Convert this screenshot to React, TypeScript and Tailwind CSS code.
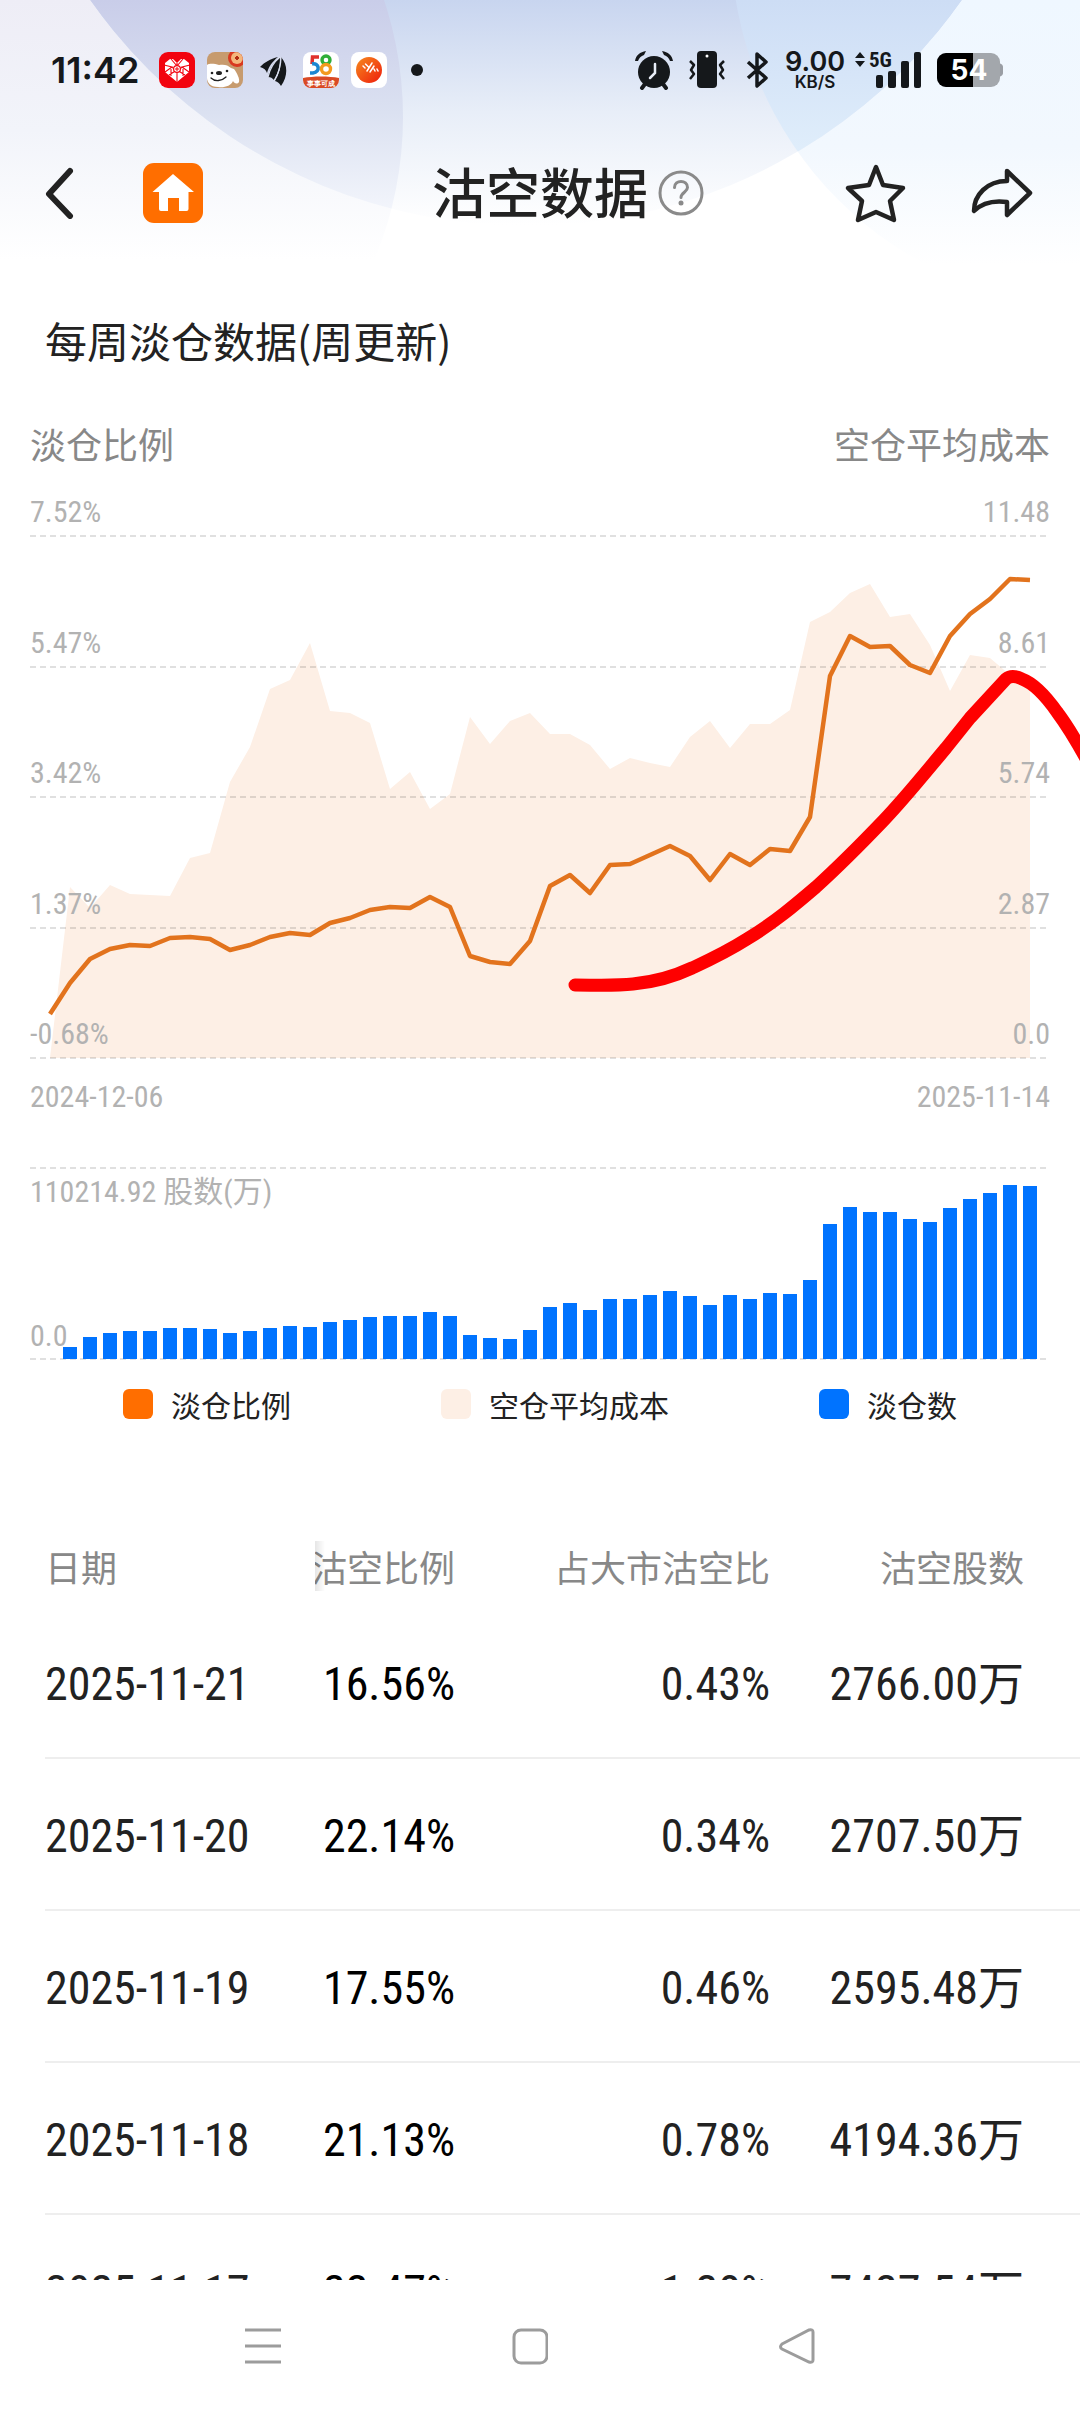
import clsx from 'clsx';
import type { ReactNode } from 'react';

// y of every weekly point, measured down from the top grid line (plot is 522 high)
const COST_Y = [
  522, 351, 372, 349, 358, 359, 360, 322, 317, 246, 211, 153, 144, 107, 175, 177, 187, 253, 236, 273,
  258, 181, 208, 185, 177, 198, 198, 209, 233, 222, 227, 231, 201, 185, 212, 188, 188, 174, 86, 76,
  57, 48, 81, 78, 109, 155, 119, 122, 139, 154,
];

const RATIO_Y = [
  478, 447, 423, 413, 409, 410, 402, 401, 403, 414, 409, 401, 397, 399, 387, 382, 374, 371, 372, 361,
  371, 420, 426, 428, 405, 350, 339, 357, 329, 328, 319, 310, 320, 344, 318, 329, 313, 315, 281, 140,
  100, 111, 110, 129, 137, 100, 78, 63, 43, 44,
];

const SHARES = [
  0, 12, 22, 26, 28, 28, 31, 31, 30, 26, 28, 31, 33, 32, 37, 39, 42, 43, 43, 47,
  43, 24, 21, 20, 29, 52, 56, 49, 60, 60, 64, 68, 63, 54, 64, 60, 66, 65, 79, 135,
  152, 147, 147, 140, 137, 151, 160, 166, 174, 173,
];

const X0 = 50;
const STEP = 20;

const SCALE = [
  ['7.52%', '11.48'],
  ['5.47%', '8.61'],
  ['3.42%', '5.74'],
  ['1.37%', '2.87'],
  ['-0.68%', '0.0'],
];

const LEGEND = [
  { label: '淡仓比例', color: 'bg-[#ff6e00]' },
  { label: '空仓平均成本', color: 'bg-[#fdefe5]' },
  { label: '淡仓数', color: 'bg-[#0073ff]' },
];

const ROWS = [
  { date: '2025-11-21', ratio: '16.56%', market: '0.43%', shares: '2766.00万' },
  { date: '2025-11-20', ratio: '22.14%', market: '0.34%', shares: '2707.50万' },
  { date: '2025-11-19', ratio: '17.55%', market: '0.46%', shares: '2595.48万' },
  { date: '2025-11-18', ratio: '21.13%', market: '0.78%', shares: '4194.36万' },
  { date: '2025-11-17', ratio: '22.47%', market: '1.28%', shares: '7427.54万' },
];

const NUM = 'font-["Roboto_Condensed","Noto_Sans_CJK_SC",sans-serif]';

const toPoints = (ys: number[]) => ys.map((y, i) => `${X0 + i * STEP},${y}`).join(' ');

function Backdrop() {
  return (
    <svg
      className="absolute inset-x-0 top-0 h-[280px] w-full"
      viewBox="0 0 1080 280"
      preserveAspectRatio="none"
      aria-hidden="true"
    >
      <defs>
        <linearGradient id="bgLeft" gradientUnits="userSpaceOnUse" x1="0" y1="0" x2="0" y2="260">
          <stop offset="0" stopColor="#eeedf6" />
          <stop offset="0.5" stopColor="#f2f4fa" />
          <stop offset="1" stopColor="#ffffff" />
        </linearGradient>
        <linearGradient id="bgRight" gradientUnits="userSpaceOnUse" x1="0" y1="0" x2="0" y2="265">
          <stop offset="0" stopColor="#eff7ff" />
          <stop offset="0.55" stopColor="#f2f8fe" />
          <stop offset="1" stopColor="#ffffff" />
        </linearGradient>
        <linearGradient id="bgMid" gradientUnits="userSpaceOnUse" x1="0" y1="0" x2="0" y2="225">
          <stop offset="0" stopColor="#c8d5ef" />
          <stop offset="0.5" stopColor="#e8eef8" />
          <stop offset="1" stopColor="#ffffff" />
        </linearGradient>
        <linearGradient id="bgMidLeft" gradientUnits="userSpaceOnUse" x1="0" y1="0" x2="0" y2="225">
          <stop offset="0" stopColor="#c9cde9" />
          <stop offset="0.5" stopColor="#dbe1f1" />
          <stop offset="1" stopColor="#f6f8fd" />
        </linearGradient>
        <linearGradient id="bgMidRight" gradientUnits="userSpaceOnUse" x1="0" y1="0" x2="0" y2="155">
          <stop offset="0" stopColor="#cdddf5" />
          <stop offset="1" stopColor="#e0eefb" />
        </linearGradient>
        <clipPath id="bigCircle">
          <circle cx="526" cy="-307" r="533" />
        </clipPath>
      </defs>
      <circle cx="33" cy="117" r="370" fill="url(#bgLeft)" />
      <circle cx="1097" cy="-59" r="366" fill="url(#bgRight)" />
      <circle cx="526" cy="-307" r="533" fill="url(#bgMid)" />
      <g clipPath="url(#bigCircle)">
        <circle cx="33" cy="117" r="370" fill="url(#bgMidLeft)" />
        <circle cx="1097" cy="-59" r="366" fill="url(#bgMidRight)" />
      </g>
    </svg>
  );
}

function AppIcon({ children }: { children: ReactNode }) {
  return (
    <svg className="size-9 shrink-0" viewBox="0 0 36 36" aria-hidden="true">
      {children}
    </svg>
  );
}

function Notifications() {
  return (
    <div className="ml-5 flex items-center gap-3">
      <AppIcon>
        <rect width="36" height="36" rx="9" fill="#f2040f" />
        <path d="M18 30 6 20V11l5-4h3l4 4 4-4h3l5 4v9z" fill="#fff" />
        <path
          d="M18 11v19M12 7l6 7 6-7M5 13l8 2-7 5M31 13l-8 2 7 5M12 15l6 3 6-3M10 23l8-5 8 5M12 15v9M24 15v9"
          fill="none"
          stroke="#f2040f"
          strokeWidth="1.1"
        />
        <circle cx="18" cy="17" r="3.4" fill="#fff" stroke="#f2040f" strokeWidth="1.2" />
        <path d="M16 17h4M18 15v4" stroke="#f2040f" strokeWidth="1" />
      </AppIcon>
      <AppIcon>
        <defs>
          <clipPath id="dogTile">
            <rect width="36" height="36" rx="8" />
          </clipPath>
        </defs>
        <g clipPath="url(#dogTile)">
          <rect width="36" height="36" fill="#c79b6e" />
          <circle cx="30" cy="6" r="9" fill="#d9381f" />
          <circle cx="30" cy="6" r="6" fill="#f4b67c" />
          <path d="M28 6h4M30 4v4" stroke="#b32d12" strokeWidth="2" />
          <path d="M0 13c3-2 8-1 12 0 5-1 9 0 12 3l3 1c3 4 6 10 5 13-2 3-5 1-6-1-2 5-9 7-15 6C3 35 0 30 0 26z" fill="#fff" />
          <ellipse cx="12" cy="21" rx="3" ry="2" fill="#222" />
          <circle cx="5" cy="21" r="1.3" fill="#222" />
          <circle cx="20" cy="19" r="1.3" fill="#222" />
          <path d="M4 26c4 4 11 3 15-1" fill="none" stroke="#222" strokeWidth="1.3" strokeLinecap="round" />
        </g>
      </AppIcon>
      <AppIcon>
        <path d="M5 15C10 10 15 7 23 5c-6 5-9 9-11 16-1-3-3-5-7-6z" fill="#15181b" />
        <path d="M13 25C14 17 18 11 25 5c0 9-2 16-6 23-2-2-3-3-6-3z" fill="#15181b" />
        <path d="M20 29c4-7 6-14 6-24 7 8 7 19 0 29-2-3-3-4-6-5z" fill="#15181b" />
        <path d="M25 5c-6 5-10 11-12 20M26 5c0 9-2 16-7 24" fill="none" stroke="#dbe0f0" strokeWidth="1.2" />
      </AppIcon>
      <AppIcon>
        <defs>
          <clipPath id="tile58">
            <rect width="36" height="36" rx="8" />
          </clipPath>
        </defs>
        <g clipPath="url(#tile58)">
          <rect width="36" height="36" fill="#fff" />
          <path d="M16 5H9.500L9 12" fill="none" stroke="#e0302b" strokeWidth="3.500" />
          <path d="M9 12c7-2 9 8 1 9H7" fill="none" stroke="#1c86d1" strokeWidth="3.500" />
          <circle cx="23" cy="8" r="4" fill="none" stroke="#2fae38" strokeWidth="3.400" />
          <circle cx="23" cy="17" r="4.500" fill="none" stroke="#f39a1d" strokeWidth="3.400" />
          <path d="M0 26c10-2 26-2 36 0v10H0z" fill="#d94a24" />
          <text x="18" y="34" textAnchor="middle" fontSize="7" fontWeight="700" fill="#fff">
            事事可成
          </text>
        </g>
      </AppIcon>
      <AppIcon>
        <defs>
          <linearGradient id="ball" x1="0" y1="0" x2="1" y2="1">
            <stop offset="0" stopColor="#f68a1e" />
            <stop offset="1" stopColor="#ee1c0c" />
          </linearGradient>
        </defs>
        <rect width="36" height="36" rx="8" fill="#fff" />
        <circle cx="18" cy="18" r="13" fill="url(#ball)" />
        <path
          d="M12 14l2 2M14.500 12l3 3M16 19l5-8M19 20l4-6M23 17l1 2M26 17l1 2"
          stroke="#fff"
          strokeWidth="1.500"
          strokeLinecap="round"
        />
      </AppIcon>
      <AppIcon>
        <circle cx="18" cy="18" r="6" fill="#15181b" />
      </AppIcon>
    </div>
  );
}

function StatusBar() {
  return (
    <div className='flex h-[140px] items-center pr-[77px] pl-[51px] font-["Inter",sans-serif] text-[#15181b]'>
      <span className="text-[36px] leading-none font-semibold">11:42</span>
      <Notifications />

      <div className="ml-auto flex items-center">
        <svg width="38" height="40" viewBox="0 0 38 40" aria-label="闹钟">
          <path d="M0 11C1 5 5 2 11 1l-2 4c-3 1-5 3-6 6zM38 11c-1-6-5-9-11-10l2 4c3 1 5 3 6 6z" fill="#15181b" />
          <circle cx="19" cy="22" r="16" fill="#15181b" />
          <path d="M10 34l-3 4M28 34l3 4" stroke="#15181b" strokeWidth="4" strokeLinecap="round" />
          <path d="M20 14v9l-5 5" stroke="#e8edf7" strokeWidth="2.500" fill="none" strokeLinecap="round" />
        </svg>
        <svg className="ml-4" width="36" height="38" viewBox="0 0 36 38" aria-label="振动">
          <rect x="8" width="20" height="37" rx="4" fill="#15181b" />
          <circle cx="18" cy="5" r="1.500" fill="#fff" />
          <path
            d="M1 10l4 4-3 5 3 4-4 5M35 10l-4 4 3 5-3 4 4 5"
            stroke="#15181b"
            strokeWidth="2.500"
            fill="none"
            strokeLinejoin="round"
          />
        </svg>
        <svg className="ml-5" width="24" height="38" viewBox="0 0 24 38" aria-label="蓝牙">
          <path d="M3 11l18 16-9 8V3l9 8L3 27" fill="none" stroke="#15181b" strokeWidth="3.500" strokeLinejoin="round" />
        </svg>
        <div className="ml-4 flex flex-col items-center">
          <span className="text-[27px] leading-6 font-semibold">9.00</span>
          <span className="text-[17px] leading-4 font-semibold">KB/S</span>
        </div>
        <svg className="ml-2 overflow-visible" width="68" height="36" viewBox="0 0 68 36" aria-label="信号">
          <path d="M2 6l5-6 5 6zM2 9l5 6 5-6z" fill="#15181b" />
          <text x="16" y="15" fontSize="21" fontWeight="700" fill="#15181b" className={NUM}>
            5G
          </text>
          <rect x="23" y="23" width="7" height="13" rx="2" fill="#15181b" />
          <rect x="35" y="19" width="8" height="17" rx="2" fill="#15181b" />
          <rect x="48" y="9" width="8" height="27" rx="2" fill="#15181b" />
          <rect x="61" y="0" width="7" height="36" rx="2" fill="#15181b" />
        </svg>
        <svg className="ml-4" width="66" height="36" viewBox="0 0 66 36" aria-label="电量">
          <defs>
            <clipPath id="battery">
              <rect y="1" width="63" height="34" rx="9" />
            </clipPath>
          </defs>
          <path d="M60 11c4 0 6 2 6 4v6c0 2-2 4-6 4z" fill="#9a9ea4" />
          <g clipPath="url(#battery)">
            <rect width="63" height="36" fill="#a3a7ac" />
            <rect width="36" height="36" fill="#000" />
          </g>
          <text x="32" y="28" textAnchor="middle" fontSize="28" fontWeight="700" fill="#fff">
            54
          </text>
        </svg>
      </div>
    </div>
  );
}

function NavHeader() {
  return (
    <header className="flex h-[106px] items-center px-[44px] text-[#222]">
      <div className="flex flex-1 items-center gap-[67px]">
        <button type="button" aria-label="返回">
          <svg width="32" height="52" viewBox="0 0 32 52">
            <path
              d="M26 4 5 27l21 22"
              fill="none"
              stroke="#222"
              strokeWidth="6"
              strokeLinecap="round"
              strokeLinejoin="round"
            />
          </svg>
        </button>
        <button type="button" aria-label="首页">
          <svg width="60" height="60" viewBox="0 0 60 60">
            <rect width="60" height="60" rx="11" fill="#ff6e00" />
            <path d="M30 11 51 29h-5.500v17q0 2-2 2H36V35H25v13h-7q-2 0-2-2V29H9.500z" fill="#fff" />
          </svg>
        </button>
      </div>

      <h1 className="pb-1 text-[54px] leading-[60px] font-medium">沽空数据</h1>

      <div className="flex flex-1 items-center">
        <button type="button" className="ml-[10px]" aria-label="说明">
          <svg width="46" height="46" viewBox="0 0 46 46" fill="none" stroke="#8a8a8a">
            <circle cx="23" cy="23" r="21" strokeWidth="3" />
            <path
              d="M16.500 17.500c0-8 13-8 13 0 0 4.500-6.500 5-6.500 10"
              strokeWidth="3"
              strokeLinecap="round"
            />
            <circle cx="23" cy="33" r="2.500" fill="#8a8a8a" stroke="none" />
          </svg>
        </button>
        <button type="button" className="ml-auto" aria-label="收藏">
          <svg width="68" height="68" viewBox="0 0 68 68">
            <path
              d="M34 8 41 26 61 29 48 42 52 61 34 53 16 61 20 42 6 29 27 26z"
              fill="none"
              stroke="#222"
              strokeWidth="4.500"
              strokeLinejoin="round"
            />
          </svg>
        </button>
        <button type="button" className="ml-[60px]" aria-label="分享">
          <svg width="66" height="56" viewBox="0 0 66 56">
            <path
              d="M37 6 60 28 37 50V37C22 35 12 38 4 46 4 30 17 16 37 16z"
              fill="none"
              stroke="#222"
              strokeWidth="4.500"
              strokeLinejoin="round"
            />
          </svg>
        </button>
      </div>
    </header>
  );
}

function GridLine({ y }: { y: number }) {
  return <line x1="30" x2="1047" y1={y} y2={y} stroke="#000" strokeOpacity="0.12" strokeWidth="2" strokeDasharray="6 4" />;
}

function RatioChart() {
  return (
    <>
      <div className="relative mt-6">
        <svg className="absolute inset-0 h-full w-full" viewBox="0 -44 1080 570" preserveAspectRatio="none" aria-hidden="true">
          <polygon points={`${X0},522 ${toPoints(COST_Y)} ${X0 + 49 * STEP},522`} fill="#fdefe5" />
          {SCALE.map((_, i) => (
            <GridLine key={i} y={Math.round(i * 130.5)} />
          ))}
          <polyline points={toPoints(RATIO_Y)} fill="none" stroke="#e2731d" strokeWidth="4.5" strokeLinejoin="round" />
        </svg>
        <div className={clsx('relative flex h-[570px] flex-col justify-between px-[30px] pb-2 text-[30px] leading-10 text-[#b2b2b2]', NUM)}>
          {SCALE.map(([left, right]) => (
            <div key={left} className="flex justify-between">
              <span>{left}</span>
              <span>{right}</span>
            </div>
          ))}
        </div>
        {/* hand-drawn marker stroke, runs off the right edge */}
        <svg
          className="pointer-events-none absolute inset-0 h-full w-full"
          viewBox="0 -44 1080 570"
          preserveAspectRatio="none"
          aria-hidden="true"
        >
          <path
            d="M575 449C595 449 615 450 633 448C655 446 675 440 692 432C705 426 725 417 747 403C775 386 795 369 816 351C838 331 862 307 884 284C905 262 925 237 946 212L970 182L1006 143Q1012 138 1022 143Q1038 149 1057 176Q1072 196 1090 230"
            fill="none"
            stroke="#fe0000"
            strokeWidth="13"
            strokeLinecap="round"
            strokeLinejoin="round"
          />
        </svg>
      </div>
      <div className={clsx('mt-[15px] flex justify-between px-[30px] text-[30px] leading-10 text-[#b2b2b2]', NUM)}>
        <span>2024-12-06</span>
        <span>2025-11-14</span>
      </div>
    </>
  );
}

function SharesChart() {
  return (
    <div className="relative mt-[47px]">
      <svg className="absolute inset-0 h-full w-full" viewBox="0 0 1080 200" preserveAspectRatio="none" aria-hidden="true">
        <GridLine y={4} />
        <GridLine y={195} />
        {SHARES.map((h, i) => (
          <rect key={i} x={X0 + i * STEP - 7} y={195 - h} width="14" height={h} fill="#0073ff" />
        ))}
      </svg>
      <div className={clsx('relative flex h-[200px] flex-col justify-between px-[30px] py-2 text-[30px] leading-10 text-[#b2b2b2]', NUM)}>
        <span>110214.92 股数(万)</span>
        <span>0.0</span>
      </div>
    </div>
  );
}

function ShortTable() {
  return (
    <div className="mt-[102px] pl-[45px]">
      <table className="w-full table-fixed whitespace-nowrap">
        <thead>
          <tr className="h-20 text-[36px] leading-[50px] text-[#888]">
            <th className="w-[264px] text-left font-normal">日期</th>
            <th className="w-[146px] font-normal">
              <div className="relative text-right">
                沽空比例
                {/* edge shadow of the pinned date column */}
                <i className="absolute inset-y-0 left-0 w-4 border-l-6 border-white bg-gradient-to-r from-black/10 to-transparent" />
              </div>
            </th>
            <th className="w-[315px] text-right font-normal">占大市沽空比</th>
            <th className="pr-[56px] text-right font-normal">沽空股数</th>
          </tr>
        </thead>
        <tbody className={clsx('text-[46px] leading-[60px] text-[#222]', NUM)}>
          {ROWS.map((r) => (
            <tr key={r.date} className="h-[152px] border-b-2 border-[#eee]">
              <td className="pt-1">{r.date}</td>
              <td className="pt-1 text-right text-black">{r.ratio}</td>
              <td className="pt-1 text-right">{r.market}</td>
              <td className="pt-1 pr-[56px] text-right">{r.shares}</td>
            </tr>
          ))}
        </tbody>
      </table>
    </div>
  );
}

function SystemNav() {
  return (
    <nav className="flex h-[132px] shrink-0 items-center justify-center gap-[231px] bg-white pr-5">
      <button type="button" aria-label="最近任务">
        <svg width="36" height="38" viewBox="0 0 36 38" stroke="#9c9c9c" strokeWidth="3">
          <path d="M0 3h36M0 19h36M0 35h36" />
        </svg>
      </button>
      <button type="button" aria-label="主屏幕">
        <svg width="36" height="38" viewBox="0 0 36 38" fill="none" stroke="#9c9c9c" strokeWidth="3">
          <rect x="2" y="3" width="33" height="33" rx="7" />
        </svg>
      </button>
      <button type="button" aria-label="后退">
        <svg width="36" height="38" viewBox="0 0 36 38" fill="none" stroke="#9c9c9c" strokeWidth="3">
          <path d="M3 17 30 3q4-1 4 2v28q0 3-4 2L3 22q-3-2 0-5z" />
        </svg>
      </button>
    </nav>
  );
}

export default function App() {
  return (
    <div className='relative flex h-screen flex-col overflow-hidden bg-white font-["Noto_Sans_CJK_SC",sans-serif]'>
      <Backdrop />
      <main className="relative min-h-0 flex-1 overflow-hidden">
        <StatusBar />
        <NavHeader />
        <h2 className="mt-16 px-[45px] text-[42px] leading-[60px] text-[#222]">每周淡仓数据(周更新)</h2>
        <div className="mt-12 flex justify-between px-[30px] text-[36px] leading-[50px] text-[#888]">
          <span>淡仓比例</span>
          <span>空仓平均成本</span>
        </div>
        <RatioChart />
        <SharesChart />
        <div className="mt-5 flex justify-around px-12 text-[30px] leading-10 text-[#222]">
          {LEGEND.map((l) => (
            <div key={l.label} className="flex items-center gap-[18px]">
              <i className={clsx('size-[30px] rounded-md', l.color)} />
              {l.label}
            </div>
          ))}
        </div>
        <ShortTable />
      </main>
      <SystemNav />
    </div>
  );
}
